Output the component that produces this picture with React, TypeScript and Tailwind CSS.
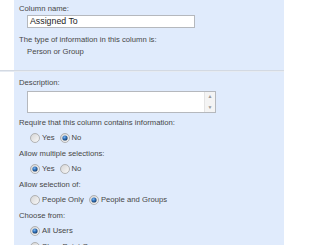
import React from "react";

const Radio = ({ checked }: { checked?: boolean }) => (
  <svg width="10" height="10" viewBox="0 0 10 10" className="shrink-0">
    <defs>
      <linearGradient id="rg" x1="0" y1="0" x2="1" y2="1">
        <stop offset="0" stopColor="#d4d4d4" />
        <stop offset="1" stopColor="#fafafa" />
      </linearGradient>
      <radialGradient id="dot" cx="0.4" cy="0.35" r="0.7">
        <stop offset="0" stopColor="#7fb6f0" />
        <stop offset="0.5" stopColor="#2d6fb8" />
        <stop offset="1" stopColor="#1b3658" />
      </radialGradient>
    </defs>
    <circle cx="5" cy="5" r="4.5" fill="url(#rg)" stroke="#a3a3a3" strokeWidth="0.8" />
    {checked && <circle cx="5" cy="5" r="2.6" fill="url(#dot)" />}
  </svg>
);

const Option = ({ label, checked }: { label: string; checked?: boolean }) => (
  <span className="flex items-center gap-[2px] mr-[5px]">
    <Radio checked={checked} />
    <span>{label}</span>
  </span>
);

const Label = ({ children }: { children: React.ReactNode }) => (
  <div className="h-[15.5px] leading-[15.5px]">{children}</div>
);

const Options = ({ children }: { children: React.ReactNode }) => (
  <div className="flex h-[15.5px] items-center pl-[11px]">{children}</div>
);

export default function App() {
  return (
    <div
      className="w-[320px] h-[245px] overflow-hidden bg-white text-[7.7px] text-[#474747]"
      style={{ fontFamily: '"Liberation Sans", Arial, sans-serif' }}
    >
      <div className="flex h-[70px]">
        <div className="w-[14px] bg-white" />
        <div className="w-[270px] bg-[#e0ebfc] pl-[5px] pt-[3px]">
          <div className="h-[12px] leading-[12px]">Column name:</div>
          <div className="ml-[8px] h-[13px] w-[168px] border border-[#b5b8bd] bg-white pl-[2px] text-[8.8px] leading-[11px] text-[#1e1e1e]">
            Assigned To
          </div>
          <div className="mt-[6px] h-[12px] leading-[12px]">The type of information in this column is:</div>
          <div className="h-[12px] pl-[8px] leading-[12px]">Person or Group</div>
        </div>
      </div>
      <div className="w-[284px] h-[2px] border-t border-[#d3d9e2] border-b-[#e6ebf2] border-b" />
      <div className="flex h-[173px]">
        <div className="w-[14px] bg-white" />
        <div className="w-[270px] bg-[#e0ebfc] pl-[5px] pt-[5px]">
          <div className="h-[12px] leading-[12px]">Description:</div>
          <div className="ml-[8px] mt-[2px] flex h-[22px] w-[189px] border border-[#b5b8bd] bg-white">
            <div className="flex-1" />
            <div className="flex w-[11px] flex-col items-center justify-between border-l border-[#e4e4e4] bg-[#f4f4f4] py-[2px] text-[5px] leading-[5px] text-[#9a9a9a]">
              <span>▲</span>
              <span>▼</span>
            </div>
          </div>
          <div className="mt-[2px]">
            <Label>Require that this column contains information:</Label>
            <Options>
              <Option label="Yes" />
              <Option label="No" checked />
            </Options>
            <Label>Allow multiple selections:</Label>
            <Options>
              <Option label="Yes" checked />
              <Option label="No" />
            </Options>
            <Label>Allow selection of:</Label>
            <Options>
              <Option label="People Only" />
              <Option label="People and Groups" checked />
            </Options>
            <Label>Choose from:</Label>
            <Options>
              <Option label="All Users" checked />
            </Options>
            <Options>
              <Option label="SharePoint Group:" />
            </Options>
          </div>
        </div>
      </div>
    </div>
  );
}
